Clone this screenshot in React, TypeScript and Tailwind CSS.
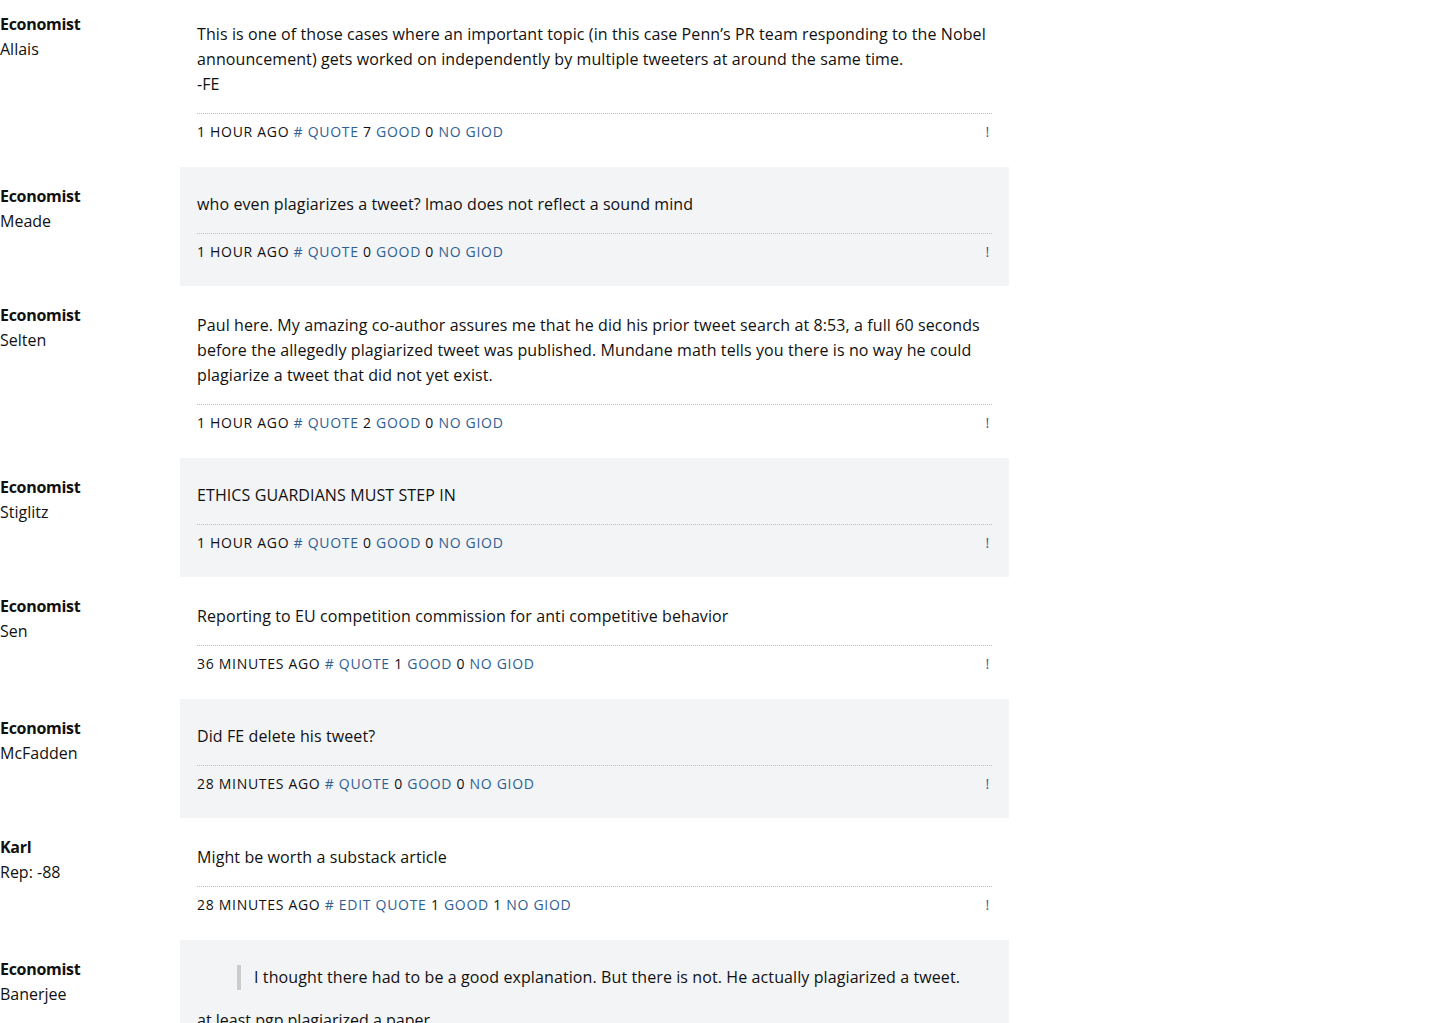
import React from "react";

type Post = {
  name: string;
  sub: string;
  lines: React.ReactNode;
  time: string;
  edit?: boolean;
  good: number;
  bad: number;
};

const posts: Post[] = [
  {
    name: "Economist",
    sub: "Allais",
    lines: (
      <>
        <span className="whitespace-nowrap">
          This is one of those cases where an important topic (in this case Penn’s PR team responding to the Nobel
        </span>
        <br />
        announcement) gets worked on independently by multiple tweeters at around the same time.
        <br />
        -FE
      </>
    ),
    time: "1 hour ago",
    good: 7,
    bad: 0,
  },
  {
    name: "Economist",
    sub: "Meade",
    lines: "who even plagiarizes a tweet? lmao does not reflect a sound mind",
    time: "1 hour ago",
    good: 0,
    bad: 0,
  },
  {
    name: "Economist",
    sub: "Selten",
    lines:
      "Paul here. My amazing co-author assures me that he did his prior tweet search at 8:53, a full 60 seconds before the allegedly plagiarized tweet was published. Mundane math tells you there is no way he could plagiarize a tweet that did not yet exist.",
    time: "1 hour ago",
    good: 2,
    bad: 0,
  },
  {
    name: "Economist",
    sub: "Stiglitz",
    lines: "ETHICS GUARDIANS MUST STEP IN",
    time: "1 hour ago",
    good: 0,
    bad: 0,
  },
  {
    name: "Economist",
    sub: "Sen",
    lines: "Reporting to EU competition commission for anti competitive behavior",
    time: "36 minutes ago",
    good: 1,
    bad: 0,
  },
  {
    name: "Economist",
    sub: "McFadden",
    lines: "Did FE delete his tweet?",
    time: "28 minutes ago",
    good: 0,
    bad: 0,
  },
  {
    name: "Karl",
    sub: "Rep: -88",
    lines: "Might be worth a substack article",
    time: "28 minutes ago",
    edit: true,
    good: 1,
    bad: 1,
  },
];

const Author = ({ name, sub }: { name: string; sub: string }) => (
  <div className="w-[180px] shrink-0 pt-[17px] leading-[25px]">
    <div className="font-bold tracking-[-0.3px]">{name}</div>
    <div>{sub}</div>
  </div>
);

const PostRow = ({ post, gray }: { post: Post; gray: boolean }) => (
  <div className="flex">
    <Author name={post.name} sub={post.sub} />
    <div
      className={`w-[829px] px-[17px] ${gray ? "bg-[#f3f4f6] pt-[25px] pb-[22px]" : "pt-[27px] pb-[23px]"}`}
    >
      <p className="leading-[25px] pr-[8px] tracking-[0.1px]">{post.lines}</p>
      <div className="mt-[16px] border-t border-dotted border-[#bdbdbd]" />
      <div className="mt-[6px] flex justify-between text-[14px] leading-[24px] uppercase tracking-[0.7px]">
        <div>
          {post.time} <span className="text-[#2f6193]">#</span>{" "}
          {post.edit && <span className="text-[#2f6193]">Edit </span>}
          <span className="text-[#2f6193]">Quote</span> {post.good}{" "}
          <span className="text-[#2f6193]">Good</span> {post.bad}{" "}
          <span className="text-[#2f6193]">No giod</span>
        </div>
        <span className="text-[#2f6193] pr-[2px]">!</span>
      </div>
    </div>
  </div>
);

export default function App() {
  return (
    <div
      className="bg-white text-[#111] text-[16px] overflow-hidden h-[1023px]"
      style={{ fontFamily: '"Open Sans", sans-serif' }}
    >
      <div className="-mt-[5px]">
        {posts.map((p, i) => (
          <PostRow key={i} post={p} gray={i % 2 === 1} />
        ))}
        {/* last, partially visible */}
        <div className="flex">
          <Author name="Economist" sub="Banerjee" />
          <div className="w-[829px] px-[17px] pt-[25px] pb-[22px] bg-[#f3f4f6]">
            <blockquote className="ml-[40px] border-l-[4px] border-[#cccccc] pl-[13px] leading-[25px] tracking-[0.1px]">
              I thought there had to be a good explanation. But there is not. He actually plagiarized a tweet.
            </blockquote>
            <p className="mt-[18px] leading-[25px]">at least pgp plagiarized a paper</p>
          </div>
        </div>
      </div>
    </div>
  );
}
